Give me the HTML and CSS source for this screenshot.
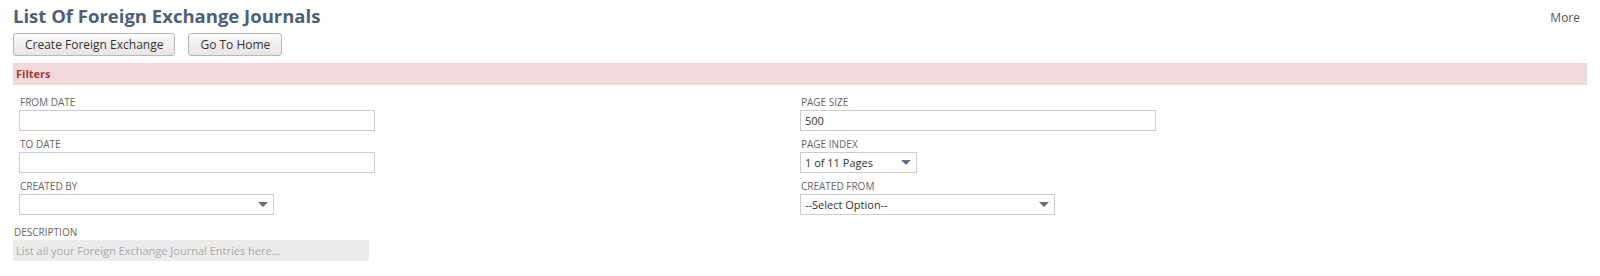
FILE: index.html
```html
<!DOCTYPE html>
<html>
<head>
<meta charset="utf-8">
<link rel="stylesheet" href="styles.css">
</head>
<body>
<div class="page">
  <div class="header">
    <h1 class="title">List Of Foreign Exchange Journals</h1>
    <a class="more">More</a>
  </div>
  <div class="buttons">
    <button class="btn">Create Foreign Exchange</button>
    <button class="btn">Go To Home</button>
  </div>
  <div class="filters-bar">Filters</div>
  <div class="filters">
    <div class="col left">
      <div class="field">
        <label class="lbl">FROM DATE</label>
        <div class="input w355"></div>
      </div>
      <div class="field">
        <label class="lbl">TO DATE</label>
        <div class="input w355"></div>
      </div>
      <div class="field">
        <label class="lbl">CREATED BY</label>
        <div class="input select w254"><span class="val"></span><span class="arrow"></span></div>
      </div>
    </div>
    <div class="col right">
      <div class="field">
        <label class="lbl">PAGE SIZE</label>
        <div class="input w355"><span class="val">500</span></div>
      </div>
      <div class="field">
        <label class="lbl">PAGE INDEX</label>
        <div class="input select w117"><span class="val">1 of 11 Pages</span><span class="arrow"></span></div>
      </div>
      <div class="field">
        <label class="lbl">CREATED FROM</label>
        <div class="input select w254"><span class="val">--Select Option--</span><span class="arrow"></span></div>
      </div>
    </div>
  </div>
  <div class="desc-field">
    <label class="lbl">DESCRIPTION</label>
    <div class="desc">List all your Foreign Exchange Journal Entries here...</div>
  </div>
</div>
</body>
</html>
```
FILE: styles.css
```css
* { box-sizing: border-box; }
html, body { margin: 0; padding: 0; background: #fff; }
body { font-family: "Open Sans", "Liberation Sans", sans-serif; color: #333; }
.page { padding: 4px 13px 0 13px; }
.header { display: flex; justify-content: space-between; align-items: flex-start; height: 29px; }
.title { margin: 0; font-size: 18.5px; font-weight: 700; color: #4d5f79; line-height: 24px; }
.more { font-size: 12px; color: #555; line-height: 18px; margin-top: 5px; margin-right: 7px; }
.buttons { display: flex; gap: 13px; }
.btn {
  height: 23px; padding: 0 11px; font-family: inherit; font-size: 12px; color: #333;
  border: 1px solid #b8b8b8; border-radius: 3px;
  background: linear-gradient(#fafafa, #e5e5e5);
  line-height: 21px;
}
.filters-bar {
  margin-top: 7px; height: 22px; background: #efd9db; color: #a33f3c;
  font-size: 11px; font-weight: 700; line-height: 22px; padding-left: 3px;
}
.filters { display: grid; grid-template-columns: 787px 1fr; margin-top: 9px; }
.col { display: flex; flex-direction: column; gap: 5px; }
.col.left { padding-left: 6px; }
.field { display: flex; flex-direction: column; }
.lbl { font-size: 10px; color: #666; line-height: 16px; height: 16px; margin-bottom: 0; padding-left: 1px; }
.input {
  height: 21px; border: 1px solid #ccc; background: #fff; display: flex; align-items: center;
  font-size: 11px; color: #333; padding: 0 4px; margin-top: 0;
}
.w355 { width: 356px; }
.w254 { width: 255px; }
.w117 { width: 117px; }
.select { justify-content: space-between; }
.arrow {
  width: 10px; height: 5px; background: #5b6f8c;
  clip-path: polygon(0 0, 100% 0, 50% 100%);
  margin-right: 1px;
}
.desc-field { display: flex; flex-direction: column; margin-top: 9px; }
.desc {
  width: 356px; height: 21px; background: #ebebeb; color: #aaa; font-size: 11px;
  line-height: 21px; padding-left: 3px; border-radius: 1px;
}
```
